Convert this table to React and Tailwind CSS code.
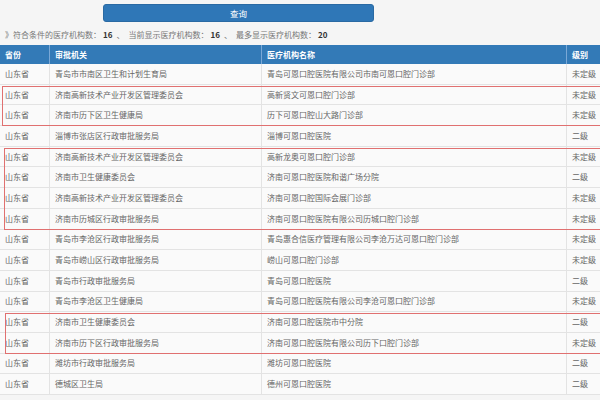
import React from "react"

const groups = [
  { box: null, rows: [["山东省", "青岛市市南区卫生和计划生育局", "青岛可恩口腔医院有限公司市南可恩口腔门诊部", "未定级"]] },
  {
    box: "left-[2px]",
    rows: [
      ["山东省", "济南高新技术产业开发区管理委员会", "高新贤文可恩口腔门诊部", "未定级"],
      ["山东省", "济南市历下区卫生健康局", "历下可恩口腔山大路门诊部", "未定级"],
    ],
  },
  { box: null, rows: [["山东省", "淄博市张店区行政审批服务局", "淄博可恩口腔医院", "二级"]] },
  {
    box: "left-[4px]",
    rows: [
      ["山东省", "济南高新技术产业开发区管理委员会", "高新龙奥可恩口腔门诊部", "未定级"],
      ["山东省", "济南市卫生健康委员会", "济南可恩口腔医院和谐广场分院", "二级"],
      ["山东省", "济南高新技术产业开发区管理委员会", "济南可恩口腔国际会展门诊部", "未定级"],
      ["山东省", "济南市历城区行政审批服务局", "济南可恩口腔医院有限公司历城口腔门诊部", "未定级"],
    ],
  },
  {
    box: null,
    rows: [
      ["山东省", "青岛市李沧区行政审批服务局", "青岛惠合信医疗管理有限公司李沧万达可恩口腔门诊部", "未定级"],
      ["山东省", "青岛市崂山区行政审批服务局", "崂山可恩口腔门诊部", "未定级"],
      ["山东省", "青岛市行政审批服务局", "青岛可恩口腔医院", "二级"],
      ["山东省", "青岛市李沧区卫生健康局", "青岛可恩口腔医院有限公司李沧可恩口腔门诊部", "未定级"],
    ],
  },
  {
    box: "left-[5px]",
    rows: [
      ["山东省", "济南市卫生健康委员会", "济南可恩口腔医院市中分院", "二级"],
      ["山东省", "济南市历下区行政审批服务局", "济南可恩口腔医院有限公司历下口腔门诊部", "未定级"],
    ],
  },
  {
    box: null,
    rows: [
      ["山东省", "潍坊市行政审批服务局", "潍坊可恩口腔医院", "二级"],
      ["山东省", "德城区卫生局", "德州可恩口腔医院", "二级"],
    ],
  },
]

function Row({ cells }) {
  return (
    <div className="grid grid-cols-[50px_212px_305px_73px] h-[20.7px] border-b border-[#e3e3e3] bg-[#fafafa] items-center text-[#666]">
      {cells.map((c, i) => (
        <div key={i} className="h-full flex items-center pl-[5px] border-r border-[#e3e3e3] whitespace-nowrap overflow-hidden">
          {c}
        </div>
      ))}
    </div>
  )
}

export default function App() {
  return (
    <div
      className="w-[600px] h-[400px] overflow-hidden bg-[#f5f5f5] text-[8px]"
      style={{ fontFamily: '"Noto Sans CJK SC", "Liberation Sans", sans-serif' }}
    >
      {/* Search button */}
      <div className="pt-[4px]">
        <button className="ml-[103px] w-[271px] h-[18px] rounded-[3px] bg-[#2f77b7] border border-[#2a6aa3] text-white text-[8.5px] flex items-center justify-center">
          查询
        </button>
      </div>

      {/* Summary */}
      <div className="mt-[6px] mb-[3px] h-[14px] leading-[14px] pl-[5px] text-[8px] text-[#777] whitespace-nowrap flex items-center">
        <span>》符合条件的医疗机构数：</span>
        <b className="text-[#333] ml-[2px]">16</b>
        <span className="mx-[4px]">、</span>
        <span>当前显示医疗机构数：</span>
        <b className="text-[#333] ml-[2px]">16</b>
        <span className="mx-[4px]">、</span>
        <span>最多显示医疗机构数：</span>
        <b className="text-[#333] ml-[2px]">20</b>
      </div>

      {/* Table */}
      <div className="w-[640px]">
        <div className="grid grid-cols-[50px_212px_305px_73px] h-[19px] bg-[#337ab7] text-white font-bold items-center">
          {["省份", "审批机关", "医疗机构名称", "级别"].map((h) => (
            <div key={h} className="h-full flex items-center pl-[5px] border-r border-[#7aa8d6]">
              {h}
            </div>
          ))}
        </div>
        {groups.map((g, gi) => (
          <div key={gi} className="relative">
            {g.rows.map((r, ri) => (
              <Row key={ri} cells={r} />
            ))}
            {g.box && (
              <div className={`absolute ${g.box} top-[1px] bottom-0 right-[-20px] border border-[#e07070] pointer-events-none`} />
            )}
          </div>
        ))}
      </div>
    </div>
  )
}
